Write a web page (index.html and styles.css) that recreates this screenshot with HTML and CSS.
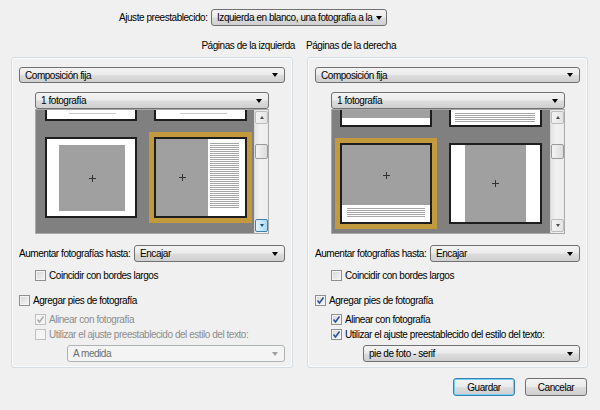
FILE: index.html
```html
<!DOCTYPE html>
<html lang="es">
<head>
<meta charset="utf-8">
<title>Ajuste preestablecido</title>
<link rel="stylesheet" href="styles.css">
</head>
<body>
<div class="dialog">
  <div class="preset-row">
    <span class="preset-label">Ajuste preestablecido:</span>
    <div class="sel preset"><span class="sel-text">Izquierda en blanco, una fotografía a la</span><span class="arrow"></span></div>
  </div>

  <div class="headers">
    <div class="head-left">Páginas de la izquierda</div>
    <div class="head-right">Páginas de la derecha</div>
  </div>

  <div class="columns">
    <!-- LEFT PANEL -->
    <div class="panel">
      <div class="sel sel-16"><span class="sel-text">Composición fija</span><span class="arrow"></span></div>
      <div class="sel sub first"><span class="sel-text">1 fotografía</span><span class="arrow"></span></div>
      <div class="thumbs sub">
        <div class="view">
          <div class="grid grid-left">
            <div class="th"><div class="mark"></div></div>
            <div class="th"><div class="mark mark-r"></div></div>
            <div class="th th-square">
              <div class="photo sq"><svg class="cross" width="7" height="7" viewBox="0 0 7 7"><path d="M3.5 0V7M0 3.5H7" stroke="#333" stroke-width="1"/></svg></div>
            </div>
            <div class="th th-split picked">
              <div class="photo split"><svg class="cross" width="7" height="7" viewBox="0 0 7 7"><path d="M3.5 0V7M0 3.5H7" stroke="#333" stroke-width="1"/></svg></div>
              <div class="lines side-lines"></div>
            </div>
          </div>
        </div>
        <div class="sb">
          <div class="sb-btn"><span class="up"></span></div>
          <div class="sb-track"><div class="sb-thumb"></div></div>
          <div class="sb-btn hot"><span class="down"></span></div>
        </div>
      </div>

      <div class="fit-row">
        <span class="fit-label">Aumentar fotografías hasta:</span>
        <div class="sel grow"><span class="sel-text">Encajar</span><span class="arrow"></span></div>
      </div>

      <div class="cb-row indent r-coin"><span class="cb"></span><span>Coincidir con bordes largos</span></div>
      <div class="cb-row r-add"><span class="cb"></span><span>Agregar pies de fotografía</span></div>
      <div class="cb-row indent r-align disabled"><span class="cb"><svg width="9" height="9" viewBox="0 0 9 9"><path d="M1.5 4.5L3.5 7L7.5 1.5" fill="none" stroke="#a8a8a8" stroke-width="1.4"/></svg></span><span>Alinear con fotografía</span></div>
      <div class="cb-row indent r-use disabled"><span class="cb"></span><span>Utilizar el ajuste preestablecido del estilo del texto:</span></div>
      <div class="sel style-sel off"><span class="sel-text">A medida</span><span class="arrow"></span></div>
    </div>

    <!-- RIGHT PANEL -->
    <div class="panel">
      <div class="sel sel-16"><span class="sel-text">Composición fija</span><span class="arrow"></span></div>
      <div class="sel sub first"><span class="sel-text">1 fotografía</span><span class="arrow"></span></div>
      <div class="thumbs sub">
        <div class="view">
          <div class="grid grid-right">
            <div class="th th-topphoto"><div class="photo band"></div></div>
            <div class="th th-caponly"><div class="lines cap-lines"></div></div>
            <div class="th th-cap picked">
              <div class="photo cap-photo"><svg class="cross" width="7" height="7" viewBox="0 0 7 7"><path d="M3.5 0V7M0 3.5H7" stroke="#333" stroke-width="1"/></svg></div>
              <div class="lines under-lines"></div>
            </div>
            <div class="th th-tall">
              <div class="photo tall"><svg class="cross" width="7" height="7" viewBox="0 0 7 7"><path d="M3.5 0V7M0 3.5H7" stroke="#333" stroke-width="1"/></svg></div>
            </div>
          </div>
        </div>
        <div class="sb">
          <div class="sb-btn"><span class="up"></span></div>
          <div class="sb-track"><div class="sb-thumb"></div></div>
          <div class="sb-btn"><span class="down"></span></div>
        </div>
      </div>

      <div class="fit-row">
        <span class="fit-label">Aumentar fotografías hasta:</span>
        <div class="sel grow"><span class="sel-text">Encajar</span><span class="arrow"></span></div>
      </div>

      <div class="cb-row indent r-coin"><span class="cb"></span><span>Coincidir con bordes largos</span></div>
      <div class="cb-row r-add"><span class="cb"><svg width="9" height="9" viewBox="0 0 9 9"><path d="M1.5 4.5L3.5 7L7.5 1.5" fill="none" stroke="#2a4f9a" stroke-width="1.5"/></svg></span><span>Agregar pies de fotografía</span></div>
      <div class="cb-row indent r-align"><span class="cb"><svg width="9" height="9" viewBox="0 0 9 9"><path d="M1.5 4.5L3.5 7L7.5 1.5" fill="none" stroke="#2a4f9a" stroke-width="1.5"/></svg></span><span>Alinear con fotografía</span></div>
      <div class="cb-row indent r-use"><span class="cb"><svg width="9" height="9" viewBox="0 0 9 9"><path d="M1.5 4.5L3.5 7L7.5 1.5" fill="none" stroke="#2a4f9a" stroke-width="1.5"/></svg></span><span>Utilizar el ajuste preestablecido del estilo del texto:</span></div>
      <div class="sel style-sel"><span class="sel-text">pie de foto - serif</span><span class="arrow"></span></div>
    </div>
  </div>

  <div class="buttons">
    <button class="btn default">Guardar</button>
    <button class="btn">Cancelar</button>
  </div>
</div>
</body>
</html>
```

FILE: styles.css
```css
html, body {
  margin: 0;
  padding: 0;
}
body {
  width: 600px;
  height: 410px;
  overflow: hidden;
  background: #f0f0f0;
  font-family: "Liberation Sans", Arial, sans-serif;
  font-size: 10px;
  letter-spacing: -0.45px;
  color: #000;
}

/* ---------- top preset row ---------- */
.preset-row {
  display: flex;
  align-items: center;
  padding: 9px 0 0 119px;
  white-space: nowrap;
}
.preset-label {
  width: 92px;
}
.preset {
  width: 176px;
}

/* ---------- selects ---------- */
.sel {
  display: flex;
  align-items: center;
  box-sizing: border-box;
  height: 17px;
  border: 1px solid #707070;
  border-radius: 3px;
  background: linear-gradient(#f3f3f3 0%, #ebebeb 48%, #dddddd 52%, #cfcfcf 100%);
  padding: 0 6px 0 5px;
}
.sel-16 {
  height: 16px;
}
.sel-text {
  flex: 1;
  white-space: nowrap;
  line-height: 15px;
}
.arrow {
  flex: none;
  width: 0;
  height: 0;
  margin-left: 4px;
  border-left: 3.5px solid transparent;
  border-right: 3.5px solid transparent;
  border-top: 4px solid #000;
}
.sel.off {
  border-color: #adb2b5;
  background: #f4f4f4;
  color: #6d6d6d;
}
.sel.off .arrow {
  border-top-color: #a0a0a0;
}

/* ---------- headers and panels ---------- */
.headers {
  display: grid;
  grid-template-columns: 282px 281px;
  column-gap: 14px;
  margin: 14px 0 0 11px;
  line-height: 11px;
  white-space: nowrap;
}
.head-left {
  text-align: right;
  margin-right: -2px;
}
.head-right {
  margin-left: -1px;
}
.columns {
  display: grid;
  grid-template-columns: 282px 281px;
  column-gap: 14px;
  margin: 6px 0 0 11px;
}
.panel {
  box-sizing: border-box;
  height: 311px;
  border: 1px solid #d5dde3;
  border-radius: 3px;
  box-shadow: inset 0 0 0 1px #f9fafb;
  padding: 9px 7px 0 7px;
}
.sub {
  margin-left: 16px;
  width: 234px;
}
.first {
  margin-top: 9px;
}

/* ---------- thumbnail browser ---------- */
.thumbs {
  display: flex;
  box-sizing: border-box;
  height: 125px;
  border: 1px solid #a9a9a9;
  background: #eaeaea;
}
.view {
  flex: 1;
  overflow: hidden;
  background: #808080;
}
.grid {
  display: grid;
  grid-template-columns: 92px 93px;
  column-gap: 17px;
  row-gap: 16px;
}
.grid-left {
  margin-top: -70px;
  padding-left: 9px;
}
.grid-right {
  margin-top: -64px;
  padding-left: 8px;
}
.th {
  box-sizing: border-box;
  height: 81px;
  border: 2px solid #1e1e1e;
  background: #fff;
  display: flex;
}
.th.picked {
  box-shadow: 0 0 0 5px #c29a3d;
}
.photo {
  background: #a0a0a0;
  display: flex;
  align-items: center;
  justify-content: center;
}
.lines {
  background: repeating-linear-gradient(to bottom, #a6a6a6 0 1px, #fff 1px 2px);
}
.mark {
  align-self: flex-end;
  margin: 0 0 5px 22px;
  width: 47px;
  height: 1px;
  background: #c8c8c8;
}
.mark-r {
  margin-left: 24px;
}
/* left page thumbs */
.th-square {
  padding: 6px 0 0 12px;
}
.sq {
  width: 66px;
  height: 66px;
}
.th-split .split {
  width: 52px;
}
.side-lines {
  width: 29px;
  height: 66px;
  margin: 4px 0 0 2px;
}
/* right page thumbs */
.th-topphoto {
  flex-direction: column;
}
.band {
  height: 70px;
}
.th-caponly {
  padding: 65px 0 0 4px;
}
.cap-lines {
  width: 80px;
  height: 9px;
}
.th-cap {
  flex-direction: column;
}
.cap-photo {
  height: 60px;
}
.under-lines {
  width: 78px;
  height: 9px;
  margin: 3px 0 0 5px;
}
.th-tall {
  padding-left: 14px;
}
.tall {
  width: 61px;
}

/* ---------- scrollbar ---------- */
.sb {
  width: 13px;
  display: flex;
  flex-direction: column;
  background: linear-gradient(to right, #e3e3e3, #f2f2f2 40%, #ececec);
  border-left: 1px solid #d9d9d9;
}
.sb-btn {
  box-sizing: border-box;
  height: 13px;
  margin: 1px 0;
  border: 1px solid #bcbcbc;
  border-radius: 2px;
  background: linear-gradient(to right, #f3f3f3, #e4e4e4);
  display: flex;
  align-items: center;
  justify-content: center;
}
.sb-btn.hot {
  border-color: #3c7fb1;
  background: linear-gradient(to right, #e2f3fd, #a9dbf6);
}
.up, .down {
  width: 0;
  height: 0;
  border-left: 2.5px solid transparent;
  border-right: 2.5px solid transparent;
}
.up {
  border-bottom: 3px solid #4d4d4d;
}
.down {
  border-top: 3px solid #4d4d4d;
}
.sb-btn.hot .down {
  border-top-color: #1b4e7a;
}
.sb-track {
  flex: 1;
}
.sb-thumb {
  box-sizing: border-box;
  margin-top: 19px;
  height: 15px;
  border: 1px solid #9a9a9a;
  border-radius: 2px;
  background: linear-gradient(to right, #f4f4f4, #dcdcdc);
}

/* ---------- option rows ---------- */
.fit-row {
  display: flex;
  align-items: center;
  margin-top: 11px;
  white-space: nowrap;
}
.fit-label {
  width: 115px;
}
.grow {
  flex: 1;
}
.cb-row {
  display: flex;
  align-items: center;
  height: 11px;
  white-space: nowrap;
}
.cb-row.indent {
  margin-left: 16px;
}
.cb {
  flex: none;
  box-sizing: border-box;
  width: 11px;
  height: 11px;
  margin-right: 3px;
  border: 1px solid #8e8f8f;
  background: linear-gradient(135deg, #d4d6d8, #f7f7f7);
  box-shadow: inset 0 0 0 1px #f4f4f4;
  display: flex;
  align-items: center;
  justify-content: center;
}
.cb svg {
  display: block;
}
.disabled {
  color: #8d8d8d;
}
.disabled .cb {
  border-color: #c0c0c0;
  background: #f4f4f4;
  box-shadow: none;
}
.r-coin {
  margin-top: 8px;
}
.r-add {
  margin-top: 14px;
}
.r-align {
  margin-top: 8px;
}
.r-use {
  margin-top: 4px;
}
.style-sel {
  margin: 5px 0 0 48px;
}

/* ---------- buttons ---------- */
.buttons {
  display: flex;
  justify-content: flex-end;
  gap: 10px;
  padding: 10px 13px 0 0;
}
.btn {
  box-sizing: border-box;
  width: 62px;
  height: 18px;
  padding: 0;
  font-family: "Liberation Sans", Arial, sans-serif;
  font-size: 10px;
  letter-spacing: -0.45px;
  color: #000;
  border: 1px solid #707070;
  border-radius: 3px;
  background: linear-gradient(#f3f3f3 0%, #ebebeb 48%, #dddddd 52%, #cfcfcf 100%);
}
.btn.default {
  border-color: #3c7fb1;
  box-shadow: inset 0 0 0 1px #6fd3f5;
}
```
